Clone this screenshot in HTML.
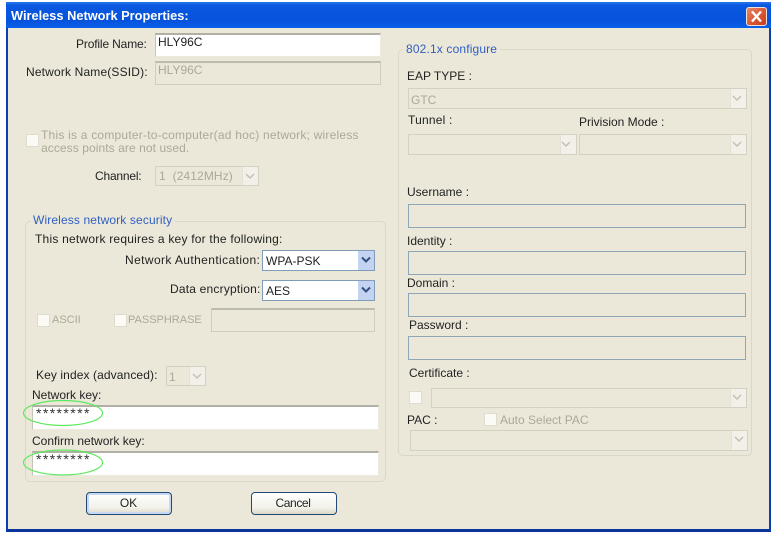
<!DOCTYPE html>
<html><head><meta charset="utf-8"><style>
html,body{margin:0;padding:0;background:#fff}
#r{position:relative;width:778px;height:540px;overflow:hidden;background:#fff;font-family:"Liberation Sans",sans-serif;font-size:12px;color:#222;filter:blur(.35px)}
#r div,#r svg{position:absolute;box-sizing:border-box}
.t{white-space:nowrap;line-height:14px}
.d{color:#aca899}
.l{color:#2f5fc0}
.i{background:#fff;border:1px solid #eceadf;border-top:2px solid #b0b0a4;border-left:1px solid #c4c4b8}
.e{border:1px solid #cfcdbd;background:#ebe8d9;border-top:2px solid #bdbbab}
.b{border:1px solid #8fa5b8;background:#ebe8d9}
.s{border:1px solid #d3d1c2;background:#ebe8d9}
.a{background:#f2f0e8;right:0;top:0;bottom:0;width:16px;border-left:1px solid #e4e2d6}
.c{width:13px;height:13px;background:#fbfaf5;border:1px solid #dedccf}
.g{border:1px solid #d9d7c8;border-radius:5px}
.bt{border:1px solid #1f4a78;border-radius:4px;background:linear-gradient(#fff,#f2f1ea 70%,#dcd8c8);text-align:center;line-height:21px;color:#222}
.k{font-size:14px;letter-spacing:1.4px;color:#333}
</style></head><body><div id="r">
<div style="left:6px;top:2px;width:765px;height:530px;background:#ebe8d9;border:2px solid #0a3fb0;border-top:0;border-bottom:3px solid #0a349c"></div>
<div style="left:6px;top:2px;width:765px;height:26px;background:linear-gradient(#2a78ea 0,#0a58e0 12%,#0652dc 70%,#0a60ea 100%)"></div>
<div class="t" style="left:11px;top:9px;color:#fff;font-weight:bold;font-size:12.8px">Wireless Network Properties:</div>
<div style="left:746px;top:7px;width:21px;height:19px;border-radius:3px;border:1px solid #f0e0d8;background:linear-gradient(135deg,#e8876a,#d9532f 60%,#c4401f)"></div>
<svg style="left:746px;top:7px" width="21" height="19"><path d="M6 4.500L15 14.500M15 4.500L6 14.500" stroke="#fff" stroke-width="2.400"/></svg>

<div class="t" style="left:76px;top:37px;letter-spacing:-.15px">Profile Name:</div>
<div class="i" style="left:155px;top:33px;width:226px;height:24px"></div>
<div class="t" style="left:158px;top:35px">HLY96C</div>
<div class="t" style="left:26px;top:65px;letter-spacing:.16px">Network Name(SSID):</div>
<div class="e" style="left:155px;top:61px;width:226px;height:24px"></div>
<div class="t d" style="left:158px;top:63px">HLY96C</div>
<div class="c" style="left:26px;top:134px"></div>
<div class="t d" style="left:41px;top:128px;letter-spacing:.22px">This is a computer-to-computer(ad hoc) network; wireless</div>
<div class="t d" style="left:41px;top:141px;letter-spacing:.08px">access points are not used.</div>
<div class="t" style="left:95px;top:169px;letter-spacing:-.2px">Channel:</div>
<div class="s" style="left:155px;top:166px;width:104px;height:20px"><div class="a"></div></div>
<div class="t d" style="left:159px;top:169px;letter-spacing:.1px">1&nbsp; (2412MHz)</div>
<svg style="left:243px;top:171px" width="14" height="10"><path d="M3 3l4 4 4-4" fill="none" stroke="#c4c2b4" stroke-width="1.500"/></svg>

<div class="g" style="left:25px;top:221px;width:361px;height:261px"></div>
<div class="t l" style="left:30px;top:213px;background:#ebe8d9;padding:0 3px;letter-spacing:.13px">Wireless network security</div>
<div class="t" style="left:35px;top:232px;letter-spacing:.22px">This network requires a key for the following:</div>
<div class="t" style="left:125px;top:253px;letter-spacing:.4px">Network Authentication:</div>
<div class="t" style="left:170px;top:282px;letter-spacing:.2px">Data encryption:</div>
<div style="left:262px;top:250px;width:113px;height:21px;background:#fff;border:1px solid #7f9db9"><div style="right:0;top:0;bottom:0;width:16px;background:#c4d3f2"></div></div>
<div style="left:262px;top:280px;width:113px;height:21px;background:#fff;border:1px solid #7f9db9"><div style="right:0;top:0;bottom:0;width:16px;background:#c4d3f2"></div></div>
<svg style="left:359px;top:255px" width="14" height="10"><path d="M3 2.500l4 4 4-4" fill="none" stroke="#33507f" stroke-width="2"/></svg>
<svg style="left:359px;top:285px" width="14" height="10"><path d="M3 2.500l4 4 4-4" fill="none" stroke="#33507f" stroke-width="2"/></svg>
<div class="t" style="left:266px;top:254px">WPA-PSK</div>
<div class="t" style="left:266px;top:284px">AES</div>
<div class="c" style="left:37px;top:314px"></div>
<div class="t d" style="left:52px;top:313px;font-size:11px">ASCII</div>
<div class="c" style="left:114px;top:314px"></div>
<div class="t d" style="left:128px;top:313px;font-size:11px">PASSPHRASE</div>
<div class="e" style="left:211px;top:308px;width:164px;height:24px"></div>
<div class="t" style="left:36px;top:368px;letter-spacing:.1px">Key index (advanced):</div>
<div class="s" style="left:166px;top:366px;width:40px;height:20px"><div class="a"></div></div>
<div class="t d" style="left:169px;top:370px">1</div>
<svg style="left:190px;top:371px" width="14" height="10"><path d="M3 3l4 4 4-4" fill="none" stroke="#c4c2b4" stroke-width="1.500"/></svg>
<div class="t" style="left:32px;top:388px">Network key:</div>
<div class="i" style="left:32px;top:405px;width:347px;height:25px"></div>
<div class="t k" style="left:36px;top:406px">********</div>
<div class="t" style="left:32px;top:434px">Confirm network key:</div>
<div class="i" style="left:32px;top:451px;width:347px;height:25px"></div>
<div class="t k" style="left:36px;top:452px">********</div>
<svg style="left:20px;top:398px" width="90" height="82"><ellipse cx="43" cy="15" rx="39.500" ry="12.500" fill="none" stroke="#5fe85f" stroke-width="1.200"/><ellipse cx="43" cy="64.500" rx="39.500" ry="12.500" fill="none" stroke="#5fe85f" stroke-width="1.200"/></svg>
<div class="bt" style="left:86px;top:492px;width:86px;height:23px;box-shadow:inset 0 0 0 2px #c8d8f0;padding-right:1px">OK</div>
<div class="bt" style="left:251px;top:492px;width:86px;height:23px;letter-spacing:-.4px;padding-right:2px">Cancel</div>

<div class="g" style="left:398px;top:49px;width:354px;height:407px"></div>
<div class="t l" style="left:403px;top:42px;background:#ebe8d9;padding:0 3px;letter-spacing:.15px">802.1x configure</div>
<div class="t" style="left:407px;top:69px">EAP TYPE :</div>
<div class="s" style="left:408px;top:88px;width:339px;height:21px"><div class="a"></div></div>
<div class="t d" style="left:411px;top:93px">GTC</div>
<div class="t" style="left:408px;top:113px;letter-spacing:.2px">Tunnel :</div>
<div class="t" style="left:579px;top:115px">Privision Mode :</div>
<div class="s" style="left:408px;top:134px;width:169px;height:21px"><div class="a"></div></div>
<div class="s" style="left:579px;top:134px;width:168px;height:21px"><div class="a"></div></div>
<div class="t" style="left:407px;top:185px">Username :</div>
<div class="b" style="left:408px;top:204px;width:338px;height:24px"></div>
<div class="t" style="left:407px;top:234px">Identity :</div>
<div class="b" style="left:408px;top:251px;width:338px;height:24px"></div>
<div class="t" style="left:407px;top:276px">Domain :</div>
<div class="b" style="left:408px;top:293px;width:338px;height:24px"></div>
<div class="t" style="left:409px;top:318px">Password :</div>
<div class="b" style="left:408px;top:336px;width:338px;height:24px"></div>
<div class="t" style="left:409px;top:366px">Certificate :</div>
<div class="c" style="left:409px;top:391px"></div>
<div class="s" style="left:431px;top:388px;width:316px;height:20px"><div class="a"></div></div>
<div class="t" style="left:407px;top:413px">PAC :</div>
<div class="c" style="left:484px;top:413px"></div>
<div class="t d" style="left:500px;top:413px">Auto Select PAC</div>
<div class="s" style="left:410px;top:430px;width:338px;height:21px"><div class="a"></div></div>
<svg style="left:0;top:0" width="778" height="540"><path d="M733 96l4 4 4-4M562 142l4 4 4-4M733 142l4 4 4-4M733 395l4 4 4-4M735 437l4 4 4-4" fill="none" stroke="#c4c2b4" stroke-width="1.500"/></svg>
</div></body></html>
